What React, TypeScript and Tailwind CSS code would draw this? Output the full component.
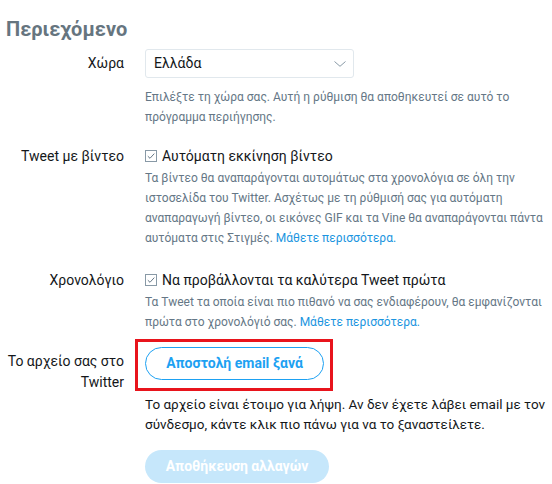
import React from "react";

function Check() {
  return (
    <span className="mt-[4px] flex h-[12px] w-[12px] shrink-0 items-center justify-center border border-[#8899a6] bg-white">
      <svg width="10" height="10" viewBox="0 0 10 10" fill="none">
        <path d="M1.8 5.2 L4 7.3 L8.3 2.6" stroke="#657786" strokeWidth="1" />
      </svg>
    </span>
  );
}

function Row({ label, children, className = "" }: { label: React.ReactNode; children: React.ReactNode; className?: string }) {
  return (
    <div className={`grid grid-cols-[124px_1fr] gap-x-[21px] ${className}`}>
      <div className="whitespace-nowrap text-right text-[14px] text-[#14171a]">{label}</div>
      <div>{children}</div>
    </div>
  );
}

const more = <span className="text-[#1b95e0]">Μάθετε περισσότερα.</span>;

export default function App() {
  return (
    <div className="h-[484px] w-[552px] overflow-hidden bg-white pr-[5px] font-['Roboto',sans-serif]">
      <h2 className="pl-[6px] pt-[16px] text-[20px] font-bold leading-[26px] text-[#66757f]">
        Περιεχόμενο
      </h2>

      {/* Χώρα */}
      <Row label={<span className="leading-[29px]">Χώρα</span>} className="mt-[7px]">
        <div className="flex h-[29px] w-[209px] items-center justify-between rounded-[3px] border border-[#e1e8ed] pl-[8px] pr-[7px] text-[14px] text-[#14171a]">
          <span>Ελλάδα</span>
          <svg width="12" height="6" viewBox="0 0 12 6" fill="none">
            <path d="M0.5 0.5 L6 5.3 L11.5 0.5" stroke="#8899a6" strokeWidth="1" />
          </svg>
        </div>
        <p className="mt-[9px] text-[12px] leading-[20px] text-[#657786]">
          Επιλέξτε τη χώρα σας. Αυτή η ρύθμιση θα αποθηκευτεί σε αυτό το πρόγραμμα περιήγησης.
        </p>
      </Row>

      {/* Tweet με βίντεο */}
      <Row label={<span className="leading-[20px]">Tweet με βίντεο</span>} className="mt-[19px]">
        <label className="flex gap-[5px] text-[14px] leading-[20px] text-[#14171a]">
          <Check />
          Αυτόματη εκκίνηση βίντεο
        </label>
        <p className="mt-[2px] text-[12px] leading-[20px] text-[#657786]">
          Τα βίντεο θα αναπαράγονται αυτομάτως στα χρονολόγια σε όλη την ιστοσελίδα του Twitter. Ασχέτως με τη ρύθμισή σας για αυτόματη αναπαραγωγή βίντεο, οι εικόνες GIF και τα Vine θα αναπαράγονται πάντα αυτόματα στις Στιγμές. {more}
        </p>
      </Row>

      {/* Χρονολόγιο */}
      <Row label={<span className="leading-[20px]">Χρονολόγιο</span>} className="mt-[22px]">
        <label className="flex gap-[5px] text-[14px] leading-[20px] text-[#14171a]">
          <Check />
          Να προβάλλονται τα καλύτερα Tweet πρώτα
        </label>
        <p className="mt-[2px] text-[12px] leading-[20px] text-[#657786]">
          Τα Tweet τα οποία είναι πιο πιθανό να σας ενδιαφέρουν, θα εμφανίζονται πρώτα στο χρονολόγιό σας. {more}
        </p>
      </Row>

      {/* Αρχείο */}
      <Row
        label={
          <div className="pt-[4px] leading-[21px]">
            Το αρχείο σας στο
            <br />
            Twitter
          </div>
        }
        className="mt-[15px]"
      >
        <div className="relative w-fit">
          <button className="h-[33px] w-[179px] rounded-full border border-[#1da1f2] bg-white text-[14px] font-bold text-[#1da1f2]">
            Αποστολή email ξανά
          </button>
          <span className="pointer-events-none absolute -bottom-[11px] -left-[10px] -right-[9px] -top-[8px] border-[3px] border-[#e8141c]" />
        </div>
        <p className="mt-[14px] text-[13.5px] leading-[20px] text-[#14171a]">
          Το αρχείο είναι έτοιμο για λήψη. Αν δεν έχετε λάβει email με τον σύνδεσμο, κάντε κλικ πιο πάνω για να το ξαναστείλετε.
        </p>
        <button className="mt-[16px] h-[33px] w-[184px] rounded-full bg-[#c6e7fb] text-[14px] font-bold text-white">
          Αποθήκευση αλλαγών
        </button>
      </Row>
    </div>
  );
}
